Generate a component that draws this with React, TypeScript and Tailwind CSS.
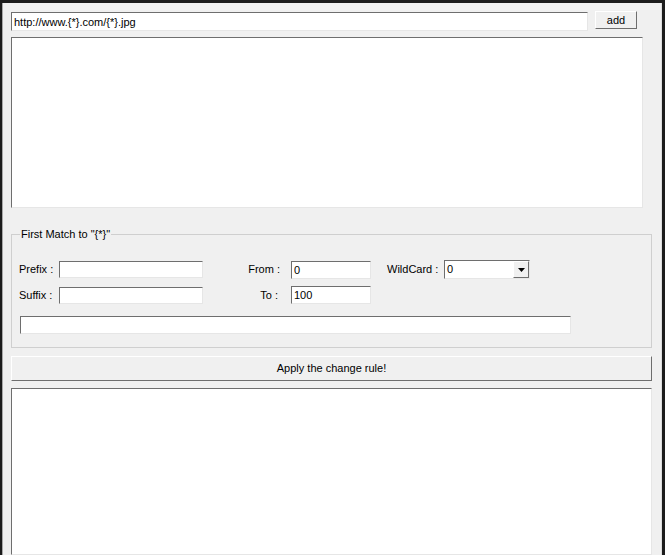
import { ReactNode } from "react";

// classic win32 3D edges
const sunken =
  "border border-t-[#6e6e6e] border-l-[#6e6e6e] border-b-[#e6e6e6] border-r-[#e6e6e6] bg-white";
const raised =
  "border border-t-white border-l-white border-b-[#6e6e6e] border-r-[#6e6e6e] bg-[#f0f0f0]";

const TextBox = ({ value = "", className = "" }: { value?: string; className?: string }) => (
  <input
    defaultValue={value}
    className={`${sunken} ${className} px-[2px] text-[11px] text-black outline-none`}
  />
);

const Label = ({ children, className = "" }: { children: ReactNode; className?: string }) => (
  <span className={`text-[11px] leading-[13px] text-black whitespace-nowrap ${className}`}>
    {children}
  </span>
);

const ComboBox = ({ value }: { value: string }) => (
  <div className={`${sunken} flex w-[86px] h-[19px] items-stretch`}>
    <span className="flex-1 px-[2px] text-[11px] leading-[16px]">{value}</span>
    <div className={`${raised} w-[16px] flex items-center justify-center`}>
      <svg width="7" height="4" viewBox="0 0 7 4">
        <path d="M0 0h7L3.5 4z" fill="#000" />
      </svg>
    </div>
  </div>
);

export default function App() {
  return (
    <div className="w-[665px] h-[555px] overflow-hidden bg-[#1c1c1c] pt-[3px] pl-[2px] pr-[3px] font-['Liberation_Sans',Arial,sans-serif]">
      <div className="h-full bg-[#f0f0f0] border-l border-l-[#a8a8a8] border-r border-r-[#dcdcdc] pl-[8px] pr-[9px] pt-[8px] flex flex-col">
        {/* url pattern + add */}
        <div className="flex items-start">
          <TextBox value="http://www.{*}.com/{*}.jpg" className="mt-[1px] w-[577px] h-[19px]" />
          <button className={`${raised} ml-[7px] w-[42px] h-[18px] text-[11px] leading-[14px]`}>add</button>
        </div>

        <textarea className={`${sunken} mt-[6px] w-[632px] h-[171px] resize-none outline-none`} />

        {/* rule group */}
        <fieldset className="mt-[20px] w-[641px] h-[120px] border border-[#cfcfcf] pl-[7px]">
          <legend className="ml-[1px] px-[1px] text-[11px] leading-[13px]">First Match to "{"{*}"}"</legend>

          <div className="mt-[19px] flex items-center">
            <Label className="w-[40px]">Prefix :</Label>
            <TextBox className="w-[144px] h-[17px]" />
            <Label className="w-[77px] text-right">From :</Label>
            <TextBox value="0" className="ml-[11px] w-[80px] h-[18px]" />
            <Label className="ml-[16px] w-[57px]">WildCard :</Label>
            <ComboBox value="0" />
          </div>

          <div className="mt-[7px] flex items-center">
            <Label className="w-[40px]">Suffix :</Label>
            <TextBox className="w-[144px] h-[17px]" />
            <Label className="w-[75px] text-right">To :</Label>
            <TextBox value="100" className="ml-[13px] w-[80px] h-[18px]" />
          </div>

          <TextBox className="mt-[12px] ml-[1px] w-[551px] h-[18px]" />
        </fieldset>

        <button className={`${raised} mt-[8px] w-[641px] h-[25px] text-[11px]`}>Apply the change rule!</button>

        <textarea className={`${sunken} mt-[7px] w-[641px] flex-1 resize-none outline-none`} />
      </div>
    </div>
  );
}
